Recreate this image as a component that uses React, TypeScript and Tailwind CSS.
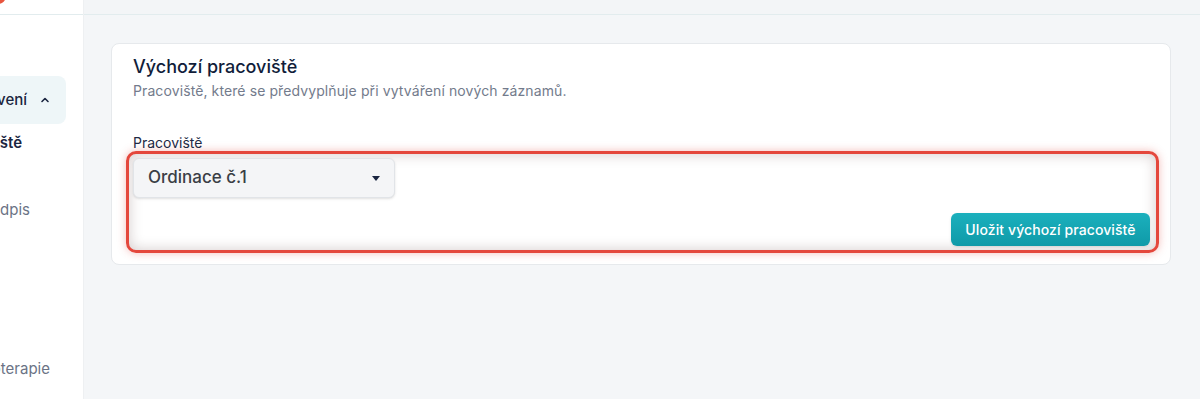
const font = { fontFamily: 'Inter, "Noto Sans", sans-serif' };

function Chevron() {
  return (
    <svg className="shrink-0" width="10" height="10" viewBox="0 0 10 10" fill="none" stroke="#1a2540" strokeWidth="1.6" strokeLinecap="round" strokeLinejoin="round">
      <path d="M2 6.5 L5 3.5 L8 6.5" />
    </svg>
  );
}

function Sidebar() {
  return (
    <aside className="w-[84px] shrink-0 bg-white border-r border-[#eef0f2] overflow-hidden flex flex-col">
      <div className="h-[15px] border-b border-[#e2ecee] overflow-hidden">
        <div className="w-[16px] h-[16px] rounded-full bg-[#e8553e] -ml-[10px] -mt-[12px]" />
      </div>
      <div className="h-[61px]" />
      <div className="w-[66px] h-[48px] rounded-r-lg bg-[#eef6f8] flex items-center justify-end pr-[16px] gap-[13px] overflow-hidden">
        <span className="whitespace-nowrap text-[15px] font-medium text-[#1a2540]">Nastavení</span>
        <Chevron />
      </div>
      <div className="mt-[9px] w-[22px] h-[20px] flex items-center justify-end overflow-hidden">
        <span className="whitespace-nowrap text-[15px] font-semibold text-[#1a2540]">Pracoviště</span>
      </div>
      <div className="mt-[47px] w-[30px] h-[20px] flex items-center justify-end overflow-hidden">
        <span className="whitespace-nowrap text-[15px] text-[#6b7385]">Podpis</span>
      </div>
      <div className="mt-[139px] w-[50px] h-[20px] flex items-center justify-end overflow-hidden">
        <span className="whitespace-nowrap text-[15px] text-[#6b7385]">Fyzioterapie</span>
      </div>
    </aside>
  );
}

export default function App() {
  return (
    <div className="w-[1200px] h-[399px] flex bg-[#f4f6f8] overflow-hidden" style={font}>
      <Sidebar />
      <main className="flex-1 flex flex-col">
        <div className="h-[15px] border-b border-[#e2ecee] bg-[#f3f5f7]" />
        <div className="pt-[28px] pl-[27px] pr-[29px]">
          <section className="bg-white border border-[#e6e9ec] rounded-lg pl-[21px] pr-[21px] pt-[11px] pb-[11px]">
            <h2 className="text-[18px] leading-[24px] font-medium text-[#111d3a]">Výchozí pracoviště</h2>
            <p className="mt-[2px] text-[14px] leading-[20px] text-[#737b8c] tracking-[0.1px]">
              Pracoviště, které se předvyplňuje při vytváření nových záznamů.
            </p>
            <label className="block mt-[33px] text-[14px] leading-[17px] text-[#1e2a44]">Pracoviště</label>
            <div className="-ml-[7px] -mr-[10px] border-[3px] border-[#e4473c] rounded-[10px] p-[4px] shadow-[0_0_8px_rgba(220,70,60,0.35),inset_0_0_14px_rgba(60,20,20,0.22)]">
              <div className="flex flex-col">
                <button className="w-[262px] h-[40px] flex items-center justify-between pl-[14px] pr-[14px] rounded-md border border-[#e1e4e8] bg-[#f4f5f7] shadow-sm">
                  <span className="text-[17px] font-medium text-[#3a3e46]">Ordinace č.1</span>
                  <svg width="8" height="5" viewBox="0 0 8 5">
                    <path d="M0 0 H8 L4 5 Z" fill="#1a2540" />
                  </svg>
                </button>
                <div className="flex justify-end mt-[15px] pr-[2px]">
                  <button className="h-[33px] w-[199px] rounded-md bg-gradient-to-b from-[#1bb0bd] to-[#0f9aa8] text-white text-[14px] font-medium tracking-[0.1px] shadow-sm">
                    Uložit výchozí pracoviště
                  </button>
                </div>
              </div>
            </div>
          </section>
        </div>
      </main>
    </div>
  );
}
